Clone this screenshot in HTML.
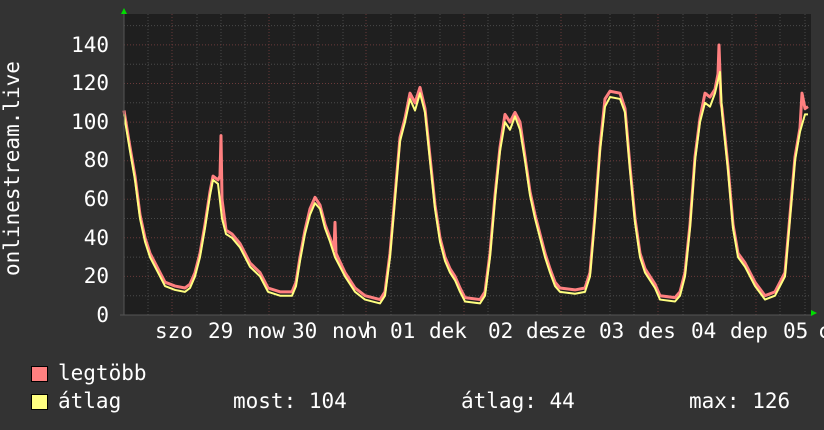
<!DOCTYPE html>
<html><head><meta charset="utf-8"><style>
html,body{margin:0;padding:0;background:#333333;}
body{width:824px;height:430px;position:relative;overflow:hidden;font-family:"DejaVu Sans Mono","Liberation Mono",monospace;color:#fff;}
.t{position:absolute;font-size:21px;white-space:pre;line-height:1;}
.y{position:absolute;font-size:21px;line-height:1;right:715px;text-align:right;}
</style></head><body>
<svg width="824" height="430" style="position:absolute;left:0;top:0">
<rect x="124" y="14" width="687" height="301" fill="#1f1f1f"/>
<g stroke="#4a4a4a" stroke-width="1" stroke-dasharray="1,2">
<line x1="124" x2="811" y1="295.7" y2="295.7"/><line x1="124" x2="811" y1="257.1" y2="257.1"/><line x1="124" x2="811" y1="218.5" y2="218.5"/><line x1="124" x2="811" y1="179.9" y2="179.9"/><line x1="124" x2="811" y1="141.4" y2="141.4"/><line x1="124" x2="811" y1="102.8" y2="102.8"/><line x1="124" x2="811" y1="64.2" y2="64.2"/><line x1="124" x2="811" y1="25.6" y2="25.6"/>
<line y1="14" y2="315" x1="148" x2="148"/><line y1="14" y2="315" x1="197" x2="197"/><line y1="14" y2="315" x1="221" x2="221"/><line y1="14" y2="315" x1="245" x2="245"/><line y1="14" y2="315" x1="294" x2="294"/><line y1="14" y2="315" x1="318" x2="318"/><line y1="14" y2="315" x1="343" x2="343"/><line y1="14" y2="315" x1="391" x2="391"/><line y1="14" y2="315" x1="415" x2="415"/><line y1="14" y2="315" x1="440" x2="440"/><line y1="14" y2="315" x1="488" x2="488"/><line y1="14" y2="315" x1="513" x2="513"/><line y1="14" y2="315" x1="537" x2="537"/><line y1="14" y2="315" x1="585" x2="585"/><line y1="14" y2="315" x1="610" x2="610"/><line y1="14" y2="315" x1="634" x2="634"/><line y1="14" y2="315" x1="683" x2="683"/><line y1="14" y2="315" x1="707" x2="707"/><line y1="14" y2="315" x1="732" x2="732"/><line y1="14" y2="315" x1="780" x2="780"/><line y1="14" y2="315" x1="805" x2="805"/>
</g>
<g stroke="#6a3a3a" stroke-width="1" stroke-dasharray="1,2">
<line x1="124" x2="811" y1="276.4" y2="276.4"/><line x1="124" x2="811" y1="237.8" y2="237.8"/><line x1="124" x2="811" y1="199.3" y2="199.3"/><line x1="124" x2="811" y1="160.7" y2="160.7"/><line x1="124" x2="811" y1="122.1" y2="122.1"/><line x1="124" x2="811" y1="83.5" y2="83.5"/><line x1="124" x2="811" y1="44.9" y2="44.9"/>
<line y1="14" y2="315" x1="172" x2="172"/><line y1="14" y2="315" x1="269" x2="269"/><line y1="14" y2="315" x1="366" x2="366"/><line y1="14" y2="315" x1="464" x2="464"/><line y1="14" y2="315" x1="561" x2="561"/><line y1="14" y2="315" x1="658" x2="658"/><line y1="14" y2="315" x1="756" x2="756"/>
</g>
<g transform="translate(0,315) scale(1,-1.929)" fill="none" stroke-linejoin="round">
<polyline vector-effect="non-scaling-stroke" stroke="#ff8080" stroke-width="3" points="124,106 130,87 135,72 140,52 145,40 150,32 158,24 165,17 175,15 185,14 190,16 195,22 200,32 205,47 210,64 213,72 218,70 220,72 221,93 222,60 226,44 232,42 240,37 250,27 260,22 268,14 280,12 292,12 296,17 300,30 305,44 310,55 315,61 320,57 325,47 330,40 334,34 335,48 336,32 345,22 355,14 365,10 380,8 385,12 390,32 395,62 400,92 405,102 410,115 415,110 420,118 425,107 430,82 435,57 440,40 445,30 450,24 455,20 460,14 465,9 480,8 485,12 490,32 495,62 500,87 505,104 510,100 515,105 520,100 525,82 530,64 535,52 540,42 545,32 550,24 555,17 560,14 575,13 585,14 590,22 595,52 600,87 605,112 610,116 620,115 625,107 630,77 635,50 640,32 645,24 655,16 660,10 675,9 680,12 685,22 690,47 695,82 700,102 705,115 710,113 715,117 718,125 719,140 721,110 722,107 728,77 733,47 738,32 745,27 755,17 765,10 775,12 785,22 790,52 795,82 800,97 802,115 805,107 808,108"/>
<polyline vector-effect="non-scaling-stroke" stroke="#ffff80" stroke-width="2" points="124,104 130,85 135,70 140,50 145,38 150,30 158,22 165,15 175,13 185,12 190,14 195,20 200,30 205,45 210,62 213,70 218,68 222,50 226,42 232,40 240,35 250,25 260,20 268,12 280,10 292,10 296,15 300,28 305,42 310,52 315,58 320,55 325,45 330,38 335,30 345,20 355,12 365,8 380,6 385,10 390,30 395,60 400,90 405,100 410,112 415,106 420,115 425,105 430,80 435,55 440,38 445,28 450,22 455,18 460,12 465,7 480,6 485,10 490,30 495,60 500,85 505,100 510,96 515,103 520,96 525,80 530,62 535,50 540,40 545,30 550,22 555,15 560,12 575,11 585,12 590,20 595,50 600,85 605,108 610,113 620,112 625,105 630,75 635,48 640,30 645,22 655,14 660,8 675,7 680,10 685,20 690,45 695,80 700,100 705,110 710,108 715,115 720,126 722,105 728,75 733,45 738,30 745,25 755,15 765,8 775,10 785,20 790,50 795,80 800,95 805,104 808,104"/>
</g>
<line x1="124" y1="12" x2="124" y2="315" stroke="#555" stroke-width="1"/>
<line x1="120" y1="315" x2="811" y2="315" stroke="#555" stroke-width="1"/>
<polygon points="121,14 127,14 124,8" fill="#00dd00"/>
<polygon points="811,310 811,316 817,313" fill="#00dd00"/>
<rect x="31.5" y="366.5" width="16" height="15" fill="#ff8080" stroke="#000"/>
<rect x="31.5" y="394.5" width="16" height="15" fill="#ffff80" stroke="#000"/>
</svg>
<div class="y" style="top:35px">140</div>
<div class="y" style="top:73px">120</div>
<div class="y" style="top:112px">100</div>
<div class="y" style="top:150px">80</div>
<div class="y" style="top:189px">60</div>
<div class="y" style="top:228px">40</div>
<div class="y" style="top:266px">20</div>
<div class="y" style="top:305px">0</div>
<div class="t" style="left:2px;top:276px;transform:rotate(-90deg);transform-origin:0 0;">onlinestream.live</div>
<div class="t" style="left:155px;top:321px">szo</div>
<div class="t" style="left:208px;top:321px">29</div>
<div class="t" style="left:247px;top:321px">now</div>
<div class="t" style="left:292px;top:321px">30</div>
<div class="t" style="left:332px;top:321px">nov</div>
<div class="t" style="left:365px;top:321px">h</div>
<div class="t" style="left:390px;top:321px">01</div>
<div class="t" style="left:429px;top:321px">dek</div>
<div class="t" style="left:488px;top:321px">02</div>
<div class="t" style="left:526px;top:321px">de</div>
<div class="t" style="left:548px;top:321px">sze</div>
<div class="t" style="left:599px;top:321px">03</div>
<div class="t" style="left:638px;top:321px">des</div>
<div class="t" style="left:691px;top:321px">04</div>
<div class="t" style="left:730px;top:321px">dep</div>
<div class="t" style="left:783px;top:321px">05</div>
<div class="t" style="left:818px;top:321px">c</div>
<div class="t" style="left:58px;top:363px">legtöbb</div>
<div class="t" style="left:58px;top:391px">átlag</div>
<div class="t" style="left:233px;top:391px">most: 104</div>
<div class="t" style="left:461px;top:391px">átlag: 44</div>
<div class="t" style="left:689px;top:391px">max: 126</div>
</body></html>
